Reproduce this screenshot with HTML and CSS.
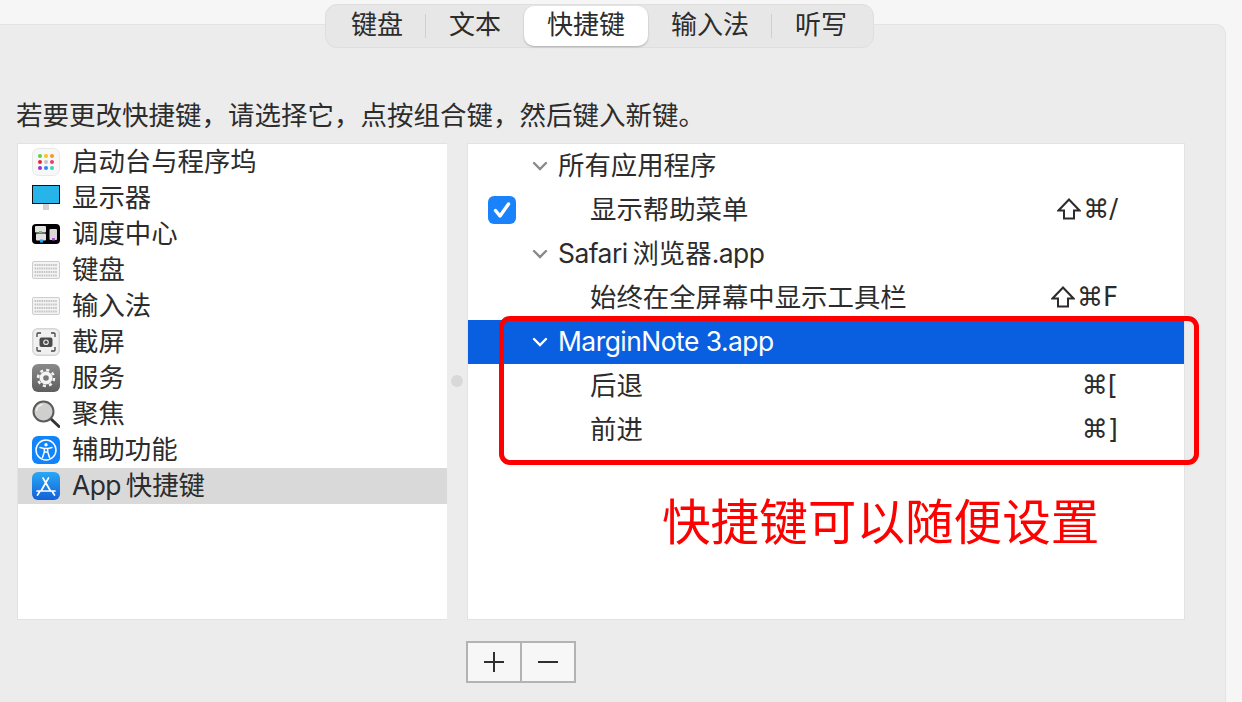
FILE: index.html
```html
<!DOCTYPE html>
<html lang="zh-CN">
<head>
  <meta charset="UTF-8">
  <meta name="viewport" content="width=device-width, initial-scale=1.0">
  <title>键盘快捷键</title>
  <link rel="stylesheet" href="styles.css">
</head>
<body>
  <svg class="defs" width="0" height="0">
    <symbol id="keyboard" viewBox="0 0 28 18">
      <rect x="0.5" y="0.5" width="27" height="17" rx="1.5" fill="#f4f4f4" stroke="#cdcdcd"/>
      <g stroke="#c6c6c6" stroke-width="2" stroke-dasharray="1.6 0.7">
        <path d="M2.5 4h23"/>
        <path d="M2.5 7.5h23"/>
        <path d="M2.5 11h23"/>
        <path d="M2.5 14.5h23"/>
      </g>
    </symbol>
    <symbol id="shift" viewBox="0 0 24 22">
      <path d="M12 1.5L1.5 12.5H7V20.5H17V12.5H22.5Z" fill="none" stroke="currentColor" stroke-width="2"/>
    </symbol>
  </svg>

  <div class="panel">
    <nav class="tabs">
      <div class="tab sep">键盘</div>
      <div class="tab">文本</div>
      <div class="tab active">快捷键</div>
      <div class="tab sep">输入法</div>
      <div class="tab">听写</div>
    </nav>

    <p class="hint">若要更改快捷键，请选择它，点按组合键，然后键入新键。</p>

    <div class="columns">
      <ul class="sidebar">
        <li class="side-row">
          <svg class="icon" viewBox="0 0 28 28">
            <rect x="0.5" y="0.5" width="27" height="27" rx="6" fill="#f7f7f7" stroke="#e8e8e8"/>
            <circle cx="8" cy="8" r="2" fill="#5fd04a"/><circle cx="14" cy="8" r="2" fill="#f5c518"/><circle cx="20" cy="8" r="2" fill="#f59a1c"/>
            <circle cx="8" cy="14" r="2" fill="#e8243c"/><circle cx="14" cy="14" r="2" fill="#c4c4c4"/><circle cx="20" cy="14" r="2" fill="#ee3b6b"/>
            <circle cx="8" cy="20" r="2" fill="#9a32c8"/><circle cx="14" cy="20" r="2" fill="#2f86ee"/><circle cx="20" cy="20" r="2" fill="#35d6bd"/>
          </svg>
          <span>启动台与程序坞</span>
        </li>
        <li class="side-row">
          <svg class="icon" viewBox="0 0 28 28">
            <rect x="11" y="20" width="6" height="6" fill="#d2d2d2"/>
            <rect x="0.5" y="1.5" width="27" height="18" fill="#27b4e8" stroke="#111"/>
          </svg>
          <span>显示器</span>
        </li>
        <li class="side-row">
          <svg class="icon" viewBox="0 0 28 28">
            <rect y="4" width="28" height="20" rx="4" fill="#000"/>
            <rect x="3" y="6" width="11" height="6.5" rx="1" fill="#e2e2e2"/>
            <rect x="4" y="13.5" width="10" height="7" rx="1" fill="#e2e2e2"/>
            <rect x="17.5" y="9" width="7.5" height="11" rx="1" fill="#d8d8d8"/>
            <rect x="7" y="11" width="3" height="2" fill="#4fd84a"/>
            <rect x="8" y="19.5" width="3" height="3" fill="#26a8f0"/>
            <rect x="20" y="18" width="3" height="2.5" fill="#a84ed8"/>
          </svg>
          <span>调度中心</span>
        </li>
        <li class="side-row">
          <svg class="icon"><use href="#keyboard" x="0" y="5" width="28" height="18"/></svg>
          <span>键盘</span>
        </li>
        <li class="side-row">
          <svg class="icon"><use href="#keyboard" x="0" y="5" width="28" height="18"/></svg>
          <span>输入法</span>
        </li>
        <li class="side-row">
          <svg class="icon" viewBox="0 0 28 28">
            <rect x="0.75" y="0.75" width="26.5" height="26.5" rx="5" fill="#f0f0f0" stroke="#d6d6d6" stroke-width="1.5"/>
            <path d="M5 9V6q0-1 1-1h3M19 5h3q1 0 1 1v3M23 19v3q0 1-1 1h-3M9 23H6q-1 0-1-1v-3" fill="none" stroke="#444" stroke-width="1.3"/>
            <rect x="7.5" y="9.5" width="13" height="9.5" rx="2" fill="#4a4a4a"/>
            <circle cx="14" cy="14.2" r="2.8" fill="#e8e8e8"/>
            <circle cx="14" cy="14.2" r="1.6" fill="#4a4a4a"/>
          </svg>
          <span>截屏</span>
        </li>
        <li class="side-row">
          <svg class="icon" viewBox="0 0 28 28">
            <defs>
              <linearGradient id="gear-bg" x1="0" y1="0" x2="0" y2="1">
                <stop offset="0" stop-color="#8a8a8a"/>
                <stop offset="1" stop-color="#5e5e5e"/>
              </linearGradient>
            </defs>
            <rect width="28" height="28" rx="6" fill="url(#gear-bg)"/>
            <circle cx="14" cy="14" r="6.5" fill="#f4f4f4"/>
            <circle cx="14" cy="14" r="8" fill="none" stroke="#f4f4f4" stroke-width="2.5" stroke-dasharray="3.1 3.18"/>
            <circle cx="14" cy="14" r="2.8" fill="#777"/>
          </svg>
          <span>服务</span>
        </li>
        <li class="side-row">
          <svg class="icon" viewBox="0 0 28 28">
            <path d="M18.5 18.5L27 26.5" stroke="#333" stroke-width="3" stroke-linecap="round"/>
            <circle cx="11.5" cy="11.5" r="10" fill="#cfd0cd" stroke="#5c5c5c" stroke-width="2"/>
            <path d="M4.5 11a7 7 0 0 1 6-6.5" fill="none" stroke="#f2f2f2" stroke-width="1.5"/>
          </svg>
          <span>聚焦</span>
        </li>
        <li class="side-row">
          <svg class="icon" viewBox="0 0 28 28">
            <rect width="28" height="28" rx="6" fill="#1183fb"/>
            <circle cx="14" cy="14" r="10" fill="none" stroke="#fff" stroke-width="1.5"/>
            <circle cx="14" cy="8.8" r="1.7" fill="#fff"/>
            <path d="M8 11.5l4.3 1V16l-1.800 5.500M20 11.500l-4.300 1V16l1.800 5.500M12.300 16h3.400M12 12.500h4" fill="none" stroke="#fff" stroke-width="1.5" stroke-linecap="round"/>
          </svg>
          <span>辅助功能</span>
        </li>
        <li class="side-row current">
          <svg class="icon" viewBox="0 0 28 28">
            <defs>
              <linearGradient id="store" x1="0" y1="0" x2="0" y2="1">
                <stop offset="0" stop-color="#2aa8f5"/>
                <stop offset="1" stop-color="#1460d8"/>
              </linearGradient>
            </defs>
            <rect width="28" height="28" rx="6" fill="url(#store)"/>
            <path d="M11 6l7.5 13M16.5 6L9 19M5 19h18M5.5 23l2-3M22.5 23l-2-3" fill="none" stroke="#fff" stroke-width="1.7" stroke-linecap="round"/>
          </svg>
          <span><span class="latin">App</span>&thinsp;快捷键</span>
        </li>
      </ul>

      <div class="splitter"></div>

      <div class="shortcuts">
        <div class="short-row">
          <span class="check-slot"></span>
          <svg class="chevron" viewBox="0 0 16 10"><path d="M2 2l6 6 6-6"/></svg>
          <span>所有应用程序</span>
        </div>
        <div class="short-row">
          <span class="check-slot">
            <svg class="checkbox" viewBox="0 0 28 28">
              <rect width="28" height="28" rx="6" fill="#1a82fb"/>
              <path d="M7.5 14.5l4.5 5.5 8.5-12" fill="none" stroke="#fff" stroke-width="3.4" stroke-linecap="round" stroke-linejoin="round"/>
            </svg>
          </span>
          <span class="child">显示帮助菜单</span>
          <span class="keys"><svg class="shift"><use href="#shift"/></svg>⌘/</span>
        </div>
        <div class="short-row">
          <span class="check-slot"></span>
          <svg class="chevron" viewBox="0 0 16 10"><path d="M2 2l6 6 6-6"/></svg>
          <span><span class="latin">Safari</span>&thinsp;浏览器<span class="latin">.app</span></span>
        </div>
        <div class="short-row">
          <span class="check-slot"></span>
          <span class="child">始终在全屏幕中显示工具栏</span>
          <span class="keys"><svg class="shift"><use href="#shift"/></svg>⌘F</span>
        </div>
        <div class="short-row selected">
          <span class="check-slot"></span>
          <svg class="chevron" viewBox="0 0 16 10"><path d="M2 2l6 6 6-6"/></svg>
          <span class="latin">MarginNote 3.app</span>
        </div>
        <div class="short-row">
          <span class="check-slot"></span>
          <span class="child">后退</span>
          <span class="keys">⌘[</span>
        </div>
        <div class="short-row">
          <span class="check-slot"></span>
          <span class="child">前进</span>
          <span class="keys">⌘]</span>
        </div>
      </div>
    </div>

    <div class="buttons">
      <div class="btn">
        <svg viewBox="0 0 20 20" width="20" height="20"><path d="M0 10h20M10 0v20"/></svg>
      </div>
      <div class="btn">
        <svg viewBox="0 0 20 20" width="20" height="20"><path d="M0 10h20"/></svg>
      </div>
    </div>
  </div>

  <!-- annotation drawn on top of the screenshot -->
  <div class="note-box"></div>
  <div class="note-text">快捷键可以随便设置</div>
</body>
</html>
```

FILE: styles.css
```css
body {
  margin: 0;
  height: 702px;
  overflow: hidden;
  position: relative;
  background-color: #f6f6f6;
  color: #2c2c2c;
  font-family: Inter, "Noto Sans CJK SC", sans-serif;
  font-size: 26.4px;
}

.defs {
  position: absolute;
}

.panel {
  box-sizing: border-box;
  width: 1226px;
  height: 678px;
  margin-top: 24px;
  padding: 0 0 0 17px;
  background-color: #ececec;
  border-top: 1px solid #e3e3e3;
  border-right: 1px solid #e3e3e3;
  border-top-right-radius: 10px;
}

.tabs {
  display: flex;
  align-items: center;
  box-sizing: border-box;
  width: 549px;
  height: 44px;
  margin: -21px 0 0 308px;
  padding: 0 2px;
  background-color: #e7e7e7;
  border: 1px solid #dedede;
  border-radius: 12px;
  font-size: 26px;
}

.tab {
  position: relative;
  flex: none;
  height: 40px;
  padding: 0 23px;
  line-height: 38px;
  white-space: nowrap;
}

.tab.active {
  background-color: white;
  border-radius: 10px;
  box-shadow: 0 1px 2px rgba(0, 0, 0, 0.25);
}

.tab.sep::after {
  content: "";
  position: absolute;
  right: 0;
  top: 8px;
  height: 24px;
  width: 1px;
  background-color: #cfcfcf;
}

.hint {
  margin: 51px 0 0 -1px;
  height: 32px;
  font-size: 26.5px;
  line-height: 32px;
  white-space: nowrap;
}

.columns {
  display: flex;
  margin-top: 12px;
  height: 477px;
}

.sidebar {
  box-sizing: border-box;
  width: 430px;
  margin: 0;
  padding: 0;
  list-style: none;
  background-color: white;
  border: 1px solid #e2e2e2;
  border-right-width: 0;
}

.side-row {
  display: flex;
  align-items: center;
  gap: 12px;
  height: 36px;
  padding-left: 14px;
  line-height: 34px;
}

.side-row > span {
  margin-bottom: 2px;
}

.side-row.current {
  background-color: #d9d9d9;
}

.icon {
  width: 28px;
  height: 28px;
  flex: none;
}

.splitter {
  position: relative;
  width: 20px;
}

.splitter::after {
  content: "";
  position: absolute;
  left: 4px;
  top: 232px;
  width: 12px;
  height: 12px;
  border-radius: 50%;
  background-color: #d8d8d8;
}

.shortcuts {
  box-sizing: border-box;
  width: 718px;
  background-color: white;
  border: 1px solid #e2e2e2;
}

.short-row {
  display: flex;
  align-items: center;
  height: 44px;
  padding-right: 66px;
  line-height: 42px;
}

.short-row > span {
  margin-bottom: 2px;
}

.short-row.selected {
  background-color: #0a5fe0;
  color: white;
}

.latin {
  letter-spacing: -0.5px;
}

.short-row > .check-slot {
  display: flex;
  align-items: center;
  width: 64px;
  margin-bottom: 0;
  padding-left: 20px;
  box-sizing: border-box;
  flex: none;
}

.checkbox {
  width: 28px;
  height: 28px;
}

.chevron {
  width: 16px;
  height: 10px;
  margin-right: 10px;
  flex: none;
  fill: none;
  stroke: #8a8a8a;
  stroke-width: 2.4;
  stroke-linecap: round;
}

.selected .chevron {
  stroke: white;
}

.child {
  margin-left: 58px;
}

.keys {
  display: flex;
  align-items: center;
  gap: 2px;
  margin-left: auto;
  font-family: "DejaVu Sans", sans-serif;
  font-size: 26px;
}

.shift {
  width: 24px;
  height: 22px;
}

.buttons {
  display: flex;
  width: 110px;
  height: 42px;
  box-sizing: border-box;
  margin: 21px 0 0 449px;
  background-color: #b3b3b3;
  border: 2px solid #b3b3b3;
  gap: 2px;
}

.btn {
  flex: 1;
  display: flex;
  align-items: center;
  justify-content: center;
  background-color: #f7f7f7;
}

.btn svg {
  fill: none;
  stroke: #2f2f2f;
  stroke-width: 2;
}

.note-box {
  position: absolute;
  left: 499px;
  top: 316px;
  width: 700px;
  height: 149px;
  box-sizing: border-box;
  border: 5px solid #fe0000;
  border-radius: 11px;
}

.note-text {
  position: absolute;
  left: 662px;
  top: 490px;
  font-size: 48.6px;
  line-height: 66px;
  color: #fe0000;
  white-space: nowrap;
}
```
